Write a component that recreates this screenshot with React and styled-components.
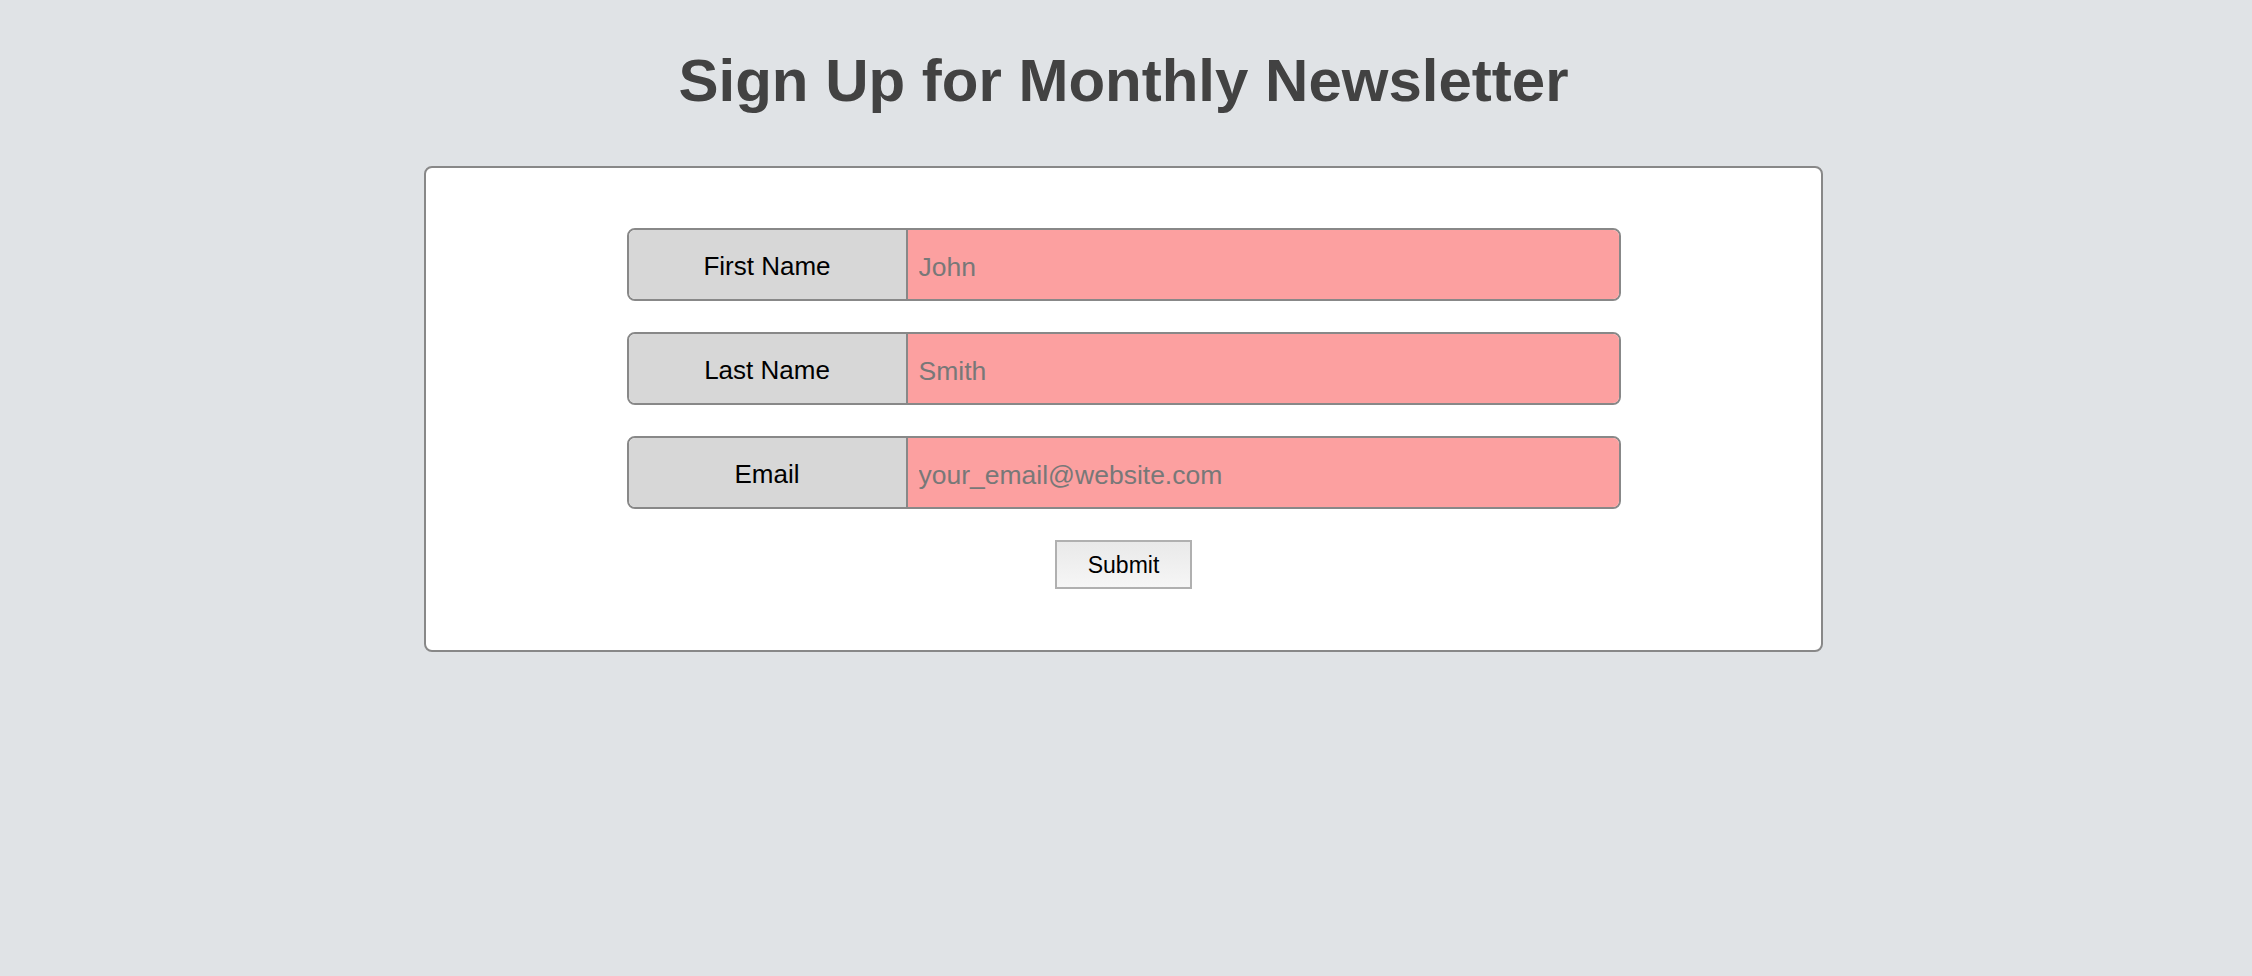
import React from 'react'
import styled, { createGlobalStyle } from 'styled-components'

const GlobalStyle = createGlobalStyle`
  html, body {
    margin: 0;
    padding: 0;
    background: #e0e3e6;
    font-family: "Liberation Sans", Arial, sans-serif;
  }
`

const Page = styled.div`
  min-height: 976px;
  padding: 45px 5px 0 0;
  box-sizing: border-box;
`

const Title = styled.h1`
  margin: 0 0 50px;
  text-align: center;
  font-size: 60px;
  line-height: 71px;
  font-weight: 700;
  color: #424242;
`

const Card = styled.form`
  width: 1399px;
  margin: 0 auto;
  box-sizing: border-box;
  background: #fff;
  border: 2px solid #888;
  border-radius: 8px;
  padding: 60px 0 61px;
  display: flex;
  flex-direction: column;
  align-items: center;
`

const Fields = styled.div`
  display: flex;
  flex-direction: column;
  gap: 31px;
  width: 994px;
`

const Row = styled.label`
  display: flex;
  height: 73px;
  box-sizing: border-box;
  border: 2px solid #888;
  border-radius: 8px;
  overflow: hidden;
`

const Label = styled.span`
  width: 279px;
  flex-shrink: 0;
  display: flex;
  align-items: center;
  justify-content: center;
  padding-top: 3px;
  box-sizing: border-box;
  background: #d7d7d7;
  border-right: 2px solid #888;
  font-size: 26px;
  color: #000;
`

const Input = styled.input`
  flex: 1;
  min-width: 0;
  border: none;
  outline: none;
  background: #fca0a0;
  padding: 5px 0 0 11px;
  font-family: "Liberation Sans", Arial, sans-serif;
  font-size: 26.5px;
  color: #222;

  &::placeholder {
    color: #787878;
  }
`

const Submit = styled.button`
  margin-top: 31px;
  width: 137px;
  height: 49px;
  border: 2px solid #b0b0b0;
  border-radius: 0;
  background: linear-gradient(#e9e9e9, #f6f6f6);
  font-family: "Liberation Sans", Arial, sans-serif;
  font-size: 23px;
  color: #000;
  padding: 2px 0 0;
`

const fields = [
  { label: 'First Name', placeholder: 'John', type: 'text' },
  { label: 'Last Name', placeholder: 'Smith', type: 'text' },
  { label: 'Email', placeholder: 'your_email@website.com', type: 'email' },
]

const App = () => {
  return (
    <Page>
      <GlobalStyle />
      <Title>Sign Up for Monthly Newsletter</Title>
      <Card onSubmit={e => e.preventDefault()}>
        <Fields>
          {fields.map(f => (
            <Row key={f.label}>
              <Label>{f.label}</Label>
              <Input type={f.type} placeholder={f.placeholder} />
            </Row>
          ))}
        </Fields>
        <Submit type="submit">Submit</Submit>
      </Card>
    </Page>
  )
}

export default App
